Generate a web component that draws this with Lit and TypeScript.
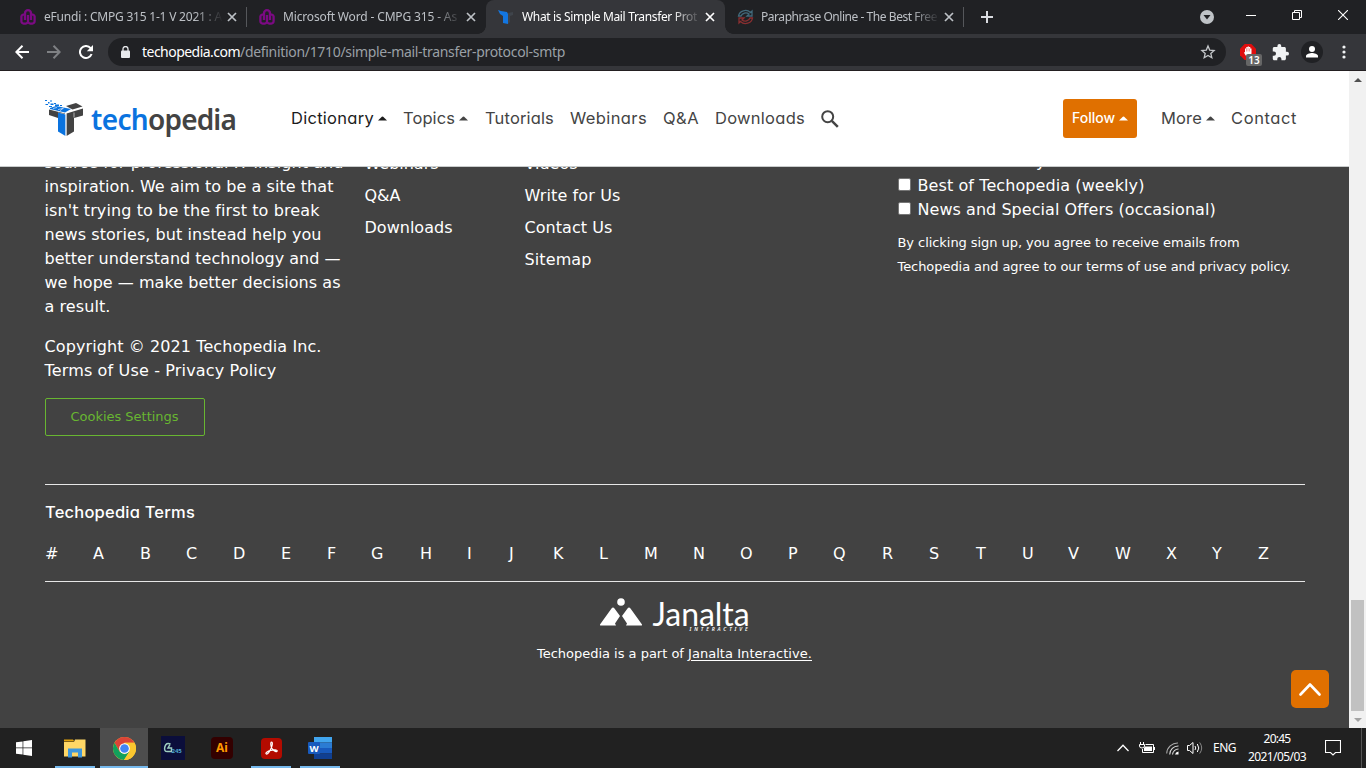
import { LitElement, html, css, svg, nothing } from "lit";
import { customElement, property, state } from "lit/decorators.js";
import { classMap } from "lit/directives/class-map.js";
import { styleMap } from "lit/directives/style-map.js";

/* A single line of text tracked so that it fills a given width. */
@customElement("fit-text")
class FitText extends LitElement {
  @property() text = "";
  @property({ type: Number }) w = 0;
  @state() private track = 0;
  static styles = css`
    :host { display: inline-block; white-space: pre; vertical-align: top; }
    .run { display: inline-block; text-decoration: inherit; text-underline-offset: 2px; }
  `;
  firstUpdated() {
    const run = this.renderRoot.querySelector(".run") as HTMLElement;
    if (this.w) this.track = (this.w - run.getBoundingClientRect().width) / this.text.length;
  }
  render() {
    return html`<span class="run" style=${styleMap({ letterSpacing: this.track + "px" })}>${this.text}</span>`;
  }
}

const t = (text: string, w: number) => html`<fit-text .text=${text} .w=${w}></fit-text>`;

const nwu = html`<svg width="16" height="16" viewBox="0 0 16 16" fill="none" stroke="#7b0a83" stroke-width="2.300"><path d="M5 11V4.200a3 3 0 0 1 6 0V11M8 6v6a2.300 2.300 0 0 1-2.300 2.600H3.700A2.300 2.300 0 0 1 1.400 12V7.500A2.300 2.300 0 0 1 5 6M8 12a2.300 2.300 0 0 0 2.300 2.600h2a2.300 2.300 0 0 0 2.300-2.600V7.500A2.300 2.300 0 0 0 11 6"/></svg>`;
const techIcon = html`<svg width="16" height="16" viewBox="0 0 16 16"><path fill="#1376e0" d="M0 1l3 1 6 1 1 2v10l-5-1V7L2 5z"/><path fill="#3f444b" d="M10 4l5-1v3l-3 1v6l-2 2z"/></svg>`;
const paraIcon = html`<svg width="17" height="16" viewBox="0 0 17 16" fill="none" stroke-width="1.300"><path stroke="#426a7c" d="M1.500 7a7 6.500 0 0 1 12-3.500L15 2v5H10l2-2a5 4.500 0 0 0-8 2z"/><path stroke="#8a2f31" d="M15.500 9a7 6.500 0 0 1-12 3.500L2 14V9h5l-2 2a5 4.500 0 0 0 8-2z"/></svg>`;

const tabs = [
  { icon: nwu, text: "eFundi : CMPG 315 1-1 V 2021 : A", w: 178, active: false, sep: true },
  { icon: nwu, text: "Microsoft Word - CMPG 315 - As", w: 174, active: false, sep: false },
  { icon: techIcon, text: "What is Simple Mail Transfer Prot", w: 175, active: true, sep: false },
  { icon: paraIcon, text: "Paraphrase Online - The Best Free", w: 176, active: false, sep: true },
];

@customElement("browser-chrome")
class BrowserChrome extends LitElement {
  static styles = css`
    :host { display: block; height: 71px; font-family: "Noto Sans", sans-serif; }
    svg { display: block; flex: none; }
    .strip { height: 34px; background: #202124; display: flex; padding-left: 8px; }
    .tab { width: 239px; height: 34px; box-sizing: border-box; padding-left: 12px; display: flex; align-items: center; position: relative; color: #bdc1c6; font-size: 12px; line-height: 16px; }
    .tab.active { background: #35363a; color: #fff; border-radius: 8px 8px 0 0; }
    .tab.active::before, .tab.active::after { content: ""; position: absolute; bottom: 0; width: 8px; height: 8px; }
    .tab.active::before { left: -8px; background: radial-gradient(circle at 0 0, transparent 7.500px, #35363a 8px); }
    .tab.active::after { right: -8px; background: radial-gradient(circle at 100% 0, transparent 7.500px, #35363a 8px); }
    .fav { width: 24px; display: flex; }
    .label { width: 178px; margin-right: 5px; overflow: hidden; -webkit-mask-image: linear-gradient(90deg, #000 150px, transparent 179px); mask-image: linear-gradient(90deg, #000 150px, transparent 179px); }
    .sep { width: 1px; height: 20px; background: #55575b; margin-left: auto; }
    .plus { margin: 10px 0 0 16px; }
    .spacer { flex: 1; }
    .search { margin: 10px 14px 0 0; }
    .ctl { width: 46px; height: 29px; display: flex; align-items: center; justify-content: center; }
    .bar { height: 36px; background: #35363a; border-bottom: 1px solid #231f21; display: flex; align-items: center; }
    .nav { width: 32px; display: flex; justify-content: center; }
    .nav:first-child { margin-left: 6px; }
    .omni { width: 1118px; height: 28px; box-sizing: border-box; border-radius: 14px; background: #202124; margin: 0 6px; display: flex; align-items: center; padding: 0 10px 0 13px; font-size: 14px; line-height: 20px; color: #9aa0a6; }
    .lock { width: 21px; display: flex; }
    .host { color: #fff; }
    .abp { position: relative; }
    .count { position: absolute; left: 6px; top: 10px; width: 16px; height: 12px; border-radius: 2px; background: #666; color: #fff; font-size: 10px; font-weight: 600; line-height: 12px; text-align: center; }
  `;
  render() {
    return html`
      <div class="strip">
        ${tabs.map((tab) => html`
          <div class=${classMap({ tab: true, active: tab.active })}>
            <span class="fav">${tab.icon}</span>
            <span class="label">${t(tab.text, tab.w)}</span>
            <svg width="10" height="10" viewBox="0 0 10 10" stroke="currentColor" stroke-width="1.700"><path d="M1 1l8 8M9 1L1 9"/></svg>
            ${tab.sep ? html`<span class="sep"></span>` : nothing}
          </div>`)}
        <svg class="plus" width="14" height="14" viewBox="0 0 14 14" stroke="#dadce0" stroke-width="2"><path d="M7 1v12M1 7h12"/></svg>
        <span class="spacer"></span>
        <svg class="search" width="14" height="14" viewBox="0 0 14 14"><circle cx="7" cy="7" r="7" fill="#bfc3c7"/><path d="M3.500 5h7L7 9.500z" fill="#202124"/></svg>
        <span class="ctl"><svg width="10" height="10" viewBox="0 0 10 10" stroke="#fff"><path d="M0 5.500h10"/></svg></span>
        <span class="ctl"><svg width="10" height="10" viewBox="0 0 10 10" stroke="#fff" fill="none"><path d="M.5 2.500h7v7h-7zM2.500 2.500v-2h7v7h-2"/></svg></span>
        <span class="ctl"><svg width="10" height="10" viewBox="0 0 10 10" stroke="#fff" stroke-width="1.100"><path d="M0 0l10 10M10 0L0 10"/></svg></span>
      </div>
      <div class="bar">
        <span class="nav"><svg width="14" height="14" viewBox="0 0 14 14" fill="none" stroke="#fff" stroke-width="2"><path d="M14 7H1.500M7.500 .8L1.300 7l6.200 6.200"/></svg></span>
        <span class="nav"><svg width="14" height="14" viewBox="0 0 14 14" fill="none" stroke="#7f8184" stroke-width="2"><path d="M0 7h12.500M6.500 .8L12.700 7l-6.200 6.200"/></svg></span>
        <span class="nav"><svg width="14" height="14" viewBox="0 0 14 14"><path fill="none" stroke="#fff" stroke-width="2" d="M12.600 9A6 6 0 1 1 11.600 3.200"/><path fill="#fff" d="M14 0v6.200H7.800z"/></svg></span>
        <div class="omni">
          <span class="lock"><svg width="9" height="12" viewBox="0 0 9 12"><rect y="4.500" width="9" height="7.500" rx="1" fill="#e8eaed"/><path d="M2 5V3a2.500 2.500 0 0 1 5 0v2" fill="none" stroke="#e8eaed" stroke-width="1.300"/></svg></span>
          <span class="host">${t("techopedia.com", 98)}</span>${t("/definition/1710/simple-mail-transfer-protocol-smtp", 325)}
          <span class="spacer"></span>
          <svg width="16" height="16" viewBox="0 0 16 16" fill="none" stroke="#c4c7ca" stroke-width="1.300"><path d="M8 2l1.700 4.100 4.400.4-3.300 2.900 1 4.300L8 11.400l-3.800 2.300 1-4.300L1.900 6.500l4.400-.4z"/></svg>
        </div>
        <span class="nav"><span class="abp">
          <svg width="16" height="16" viewBox="0 0 16 16"><path fill="#e00d0d" d="M4.700 0h6.600L16 4.700v6.600L11.300 16H4.700L0 11.300V4.700z"/><path fill="#fff" d="M5 8V4.500h1.300V3h1.400v-.5H9V3h1.300v1.500h1.200V9c0 3-1.500 4-3 4-2 0-3.500-2-4.500-4.500L5 8z"/><path d="M6.500 4.500v3M8 3.500v4M9.600 4.500v3" stroke="#e00d0d" stroke-width=".4"/></svg>
          <span class="count">13</span></span></span>
        <span class="nav"><svg width="17" height="17" viewBox="1 1 22 22" fill="#f1f3f4"><path d="M20.500 11H19V7c0-1.100-.9-2-2-2h-4V3.500a2.500 2.500 0 0 0-5 0V5H4c-1.100 0-2 .9-2 2v3.800h1.500a2.700 2.700 0 0 1 0 5.400H2V20c0 1.100.9 2 2 2h3.800v-1.500a2.700 2.700 0 0 1 5.400 0V22H17c1.100 0 2-.9 2-2v-4h1.500a2.500 2.500 0 0 0 0-5z"/></svg></span>
        <span class="nav"><svg width="22" height="22" viewBox="0 0 22 22"><circle cx="11" cy="11" r="11" fill="#202124"/><circle cx="11" cy="8" r="3" fill="#fff"/><path fill="#fff" d="M5 16.500v-1.500c0-2 4-3 6-3s6 1 6 3v1.500z"/></svg></span>
        <span class="nav"><svg width="4" height="14" viewBox="0 0 4 14" fill="#f1f3f4"><circle cx="2" cy="2" r="1.600"/><circle cx="2" cy="7" r="1.600"/><circle cx="2" cy="12" r="1.600"/></svg></span>
      </div>`;
  }
}

const caret = html`<svg class="caret" width="9" height="5" viewBox="0 0 9 5"><path fill="currentColor" d="M0 4.500L3.800.7q.7-.6 1.400 0L9 4.500z"/></svg>`;

@customElement("site-header")
class SiteHeader extends LitElement {
  static styles = css`
    :host { display: flex; height: 95px; background: #fff; border-bottom: 1px solid #c9cccc; font-family: Inter, sans-serif; font-feature-settings: "cv11"; font-size: 16.500px; line-height: 24px; color: #444; align-items: center; }
    svg { display: block; flex: none; }
    .mark { margin: 0 7px 2px 44px; }
    .word { width: 200px; display: flex; font-family: "Noto Sans", sans-serif; font-weight: 600; font-size: 28px; line-height: 36px; color: #434343; padding-top: 1px; }
    .tech { color: #0a73df; }
    .item { display: flex; align-items: center; height: 24px; margin-bottom: 1px; }
    .caret { margin-left: 4px; }
    .dark { color: #1c1c1c; }
    .w1 { width: 112px; } .w2 { width: 82px; } .w3 { width: 85px; } .w4 { width: 93px; } .w5 { width: 52px; } .w6 { width: 106px; }
    .glass { margin-right: 224px; }
    .follow { width: 74px; height: 39px; box-sizing: border-box; padding: 0 0 1px 9px; background: #e07000; border-radius: 3px; color: #fff; display: flex; align-items: center; font-size: 14px; font-weight: 500; margin-right: 24px; }
    .w7 { width: 70px; }
  `;
  render() {
    return html`
      <svg class="mark" width="40" height="38" viewBox="0 0 40 38">
        <g fill="#0a73df"><path d="M6 9l6-2 15 3-6 3.500-15-3.500z"/><path d="M14 13.500l7.500 2V37L14 32.500z"/><path d="M1 1h2v1H1zM4 3h1.500v1.500H4zM6 1.500h2v1H6zM1.500 5H4v1H1.500zM6.500 4.500h3V6h-3zM10 4h2v1h-2zM5 7h3v1H5zM11 5.500h4V7h-4zM16 6h2v1h-2z"/></g>
        <path d="M9 9.500l4-1M14 10.700l5-1.500M20 8.700l-4 3" stroke="#fff" stroke-width=".6"/>
        <g fill="#434343"><path d="M5 10.500l16 4v.500l-7-1.500V19l-9-3z"/><path d="M22.500 14.500L39 9.500v7l-9 2.500v13.500L22.500 37z"/><path d="M22 7l10-3 6.500 3.500-10 3z"/></g>
        <path d="M22 14.500V37M30 18.500v-5" stroke="#fff" stroke-width=".6"/>
      </svg>
      <span class="word"><span class="tech">${t("tech", 57)}</span>${t("opedia", 88)}</span>
      <span class="item dark w1">${t("Dictionary", 83)}${caret}</span>
      <span class="item w2">${t("Topics", 52)}${caret}</span>
      <span class="item w3">${t("Tutorials", 69)}</span>
      <span class="item w4">${t("Webinars", 77)}</span>
      <span class="item w5">${t("Q&A", 36)}</span>
      <span class="item w6">${t("Downloads", 90)}</span>
      <svg class="glass" width="18" height="18" viewBox="0 0 18 18" fill="none" stroke="#444" stroke-width="2"><circle cx="6.700" cy="6.700" r="5.500"/><path d="M10.800 10.800l6 6" stroke-width="2.500"/></svg>
      <span class="follow">${t("Follow", 43)}${caret}</span>
      <span class="item w7">${t("More", 41)}${caret}</span>
      <span class="item">${t("Contact", 66)}</span>`;
  }
}

const about: [string, number][] = [
  ["source for professional IT insight and", 299],
  ["inspiration. We aim to be a site that", 289],
  ["isn't trying to be the first to break", 275],
  ["news stories, but instead help you", 277],
  ["better understand technology and —", 296],
  ["we hope — make better decisions as", 296],
  ["a result.", 66],
];
const letters: [string, number][] = [
  ["#", 48], ["A", 47], ["B", 46], ["C", 47], ["D", 48], ["E", 46], ["F", 44], ["G", 49], ["H", 47], ["I", 42], ["J", 44], ["K", 46], ["L", 45], ["M", 49],
  ["N", 47], ["O", 48], ["P", 45], ["Q", 49], ["R", 47], ["S", 47], ["T", 46], ["U", 46], ["V", 47], ["W", 51], ["X", 46], ["Y", 46], ["Z", 14],
];

@customElement("site-footer")
class SiteFooter extends LitElement {
  static styles = css`
    :host { display: block; height: 561px; overflow: hidden; background: #424242; color: #fff; font-family: "DejaVu Sans", sans-serif; font-size: 16px; line-height: 24px; }
    svg { display: block; flex: none; }
    .cols { display: grid; grid-template-columns: 320px 160px 373px 400px; padding-left: 44.500px; height: 317px; }
    .about { margin-top: -16px; }
    .line { height: 24px; }
    .legal { margin-top: 16px; }
    .cookie { width: 160px; height: 38px; box-sizing: border-box; border: 1px solid #68b631; border-radius: 2px; color: #68b631; font-size: 13px; line-height: 36px; text-align: center; margin-top: 15px; }
    .links { margin-top: -19px; line-height: 32px; }
    .links div { height: 32px; }
    .sign { margin-top: -17px; }
    .opt { display: flex; align-items: center; height: 24px; }
    .box { width: 11px; height: 11px; background: #fff; border: 1px solid #767676; border-radius: 2px; margin: 0 7px 4px 0; }
    .fine { font-size: 13px; margin-top: 9px; }
    .fine div { height: 24px; }
    .terms { margin: 0 44px 0 45px; height: 96px; border-top: 1px solid #e6e6e6; border-bottom: 1px solid #e6e6e6; }
    h4 { margin: 15px 0 0; font: 500 16.500px/24px Inter, sans-serif; font-feature-settings: "cv11"; }
    .row { display: flex; margin-top: 18px; height: 24px; }
    .row span { flex: none; }
    .owner { display: flex; flex-direction: column; align-items: center; padding-top: 16px; font-size: 13px; line-height: 20px; }
    .brand { display: flex; height: 33px; }
    .name { margin-left: 11px; width: 97px; font: 400 32px/31px Lato, sans-serif; position: relative; }
    .sub { position: absolute; right: -1px; top: 28px; font: italic 600 5px/6px "Noto Sans", sans-serif; }
    .part { margin-top: 13px; }
    .part u { text-underline-offset: 2px; }
    .under { text-decoration: underline; }
    .top { position: absolute; left: 1291px; top: 670px; width: 38px; height: 38px; border-radius: 5px; background: #e07000; display: flex; align-items: center; justify-content: center; }
  `;
  private opt(text: string, w: number) {
    return html`<div class="opt"><span class="box"></span>${t(text, w)}</div>`;
  }
  render() {
    return html`
      <div class="cols">
        <div class="about">
          ${about.map(([s, w]) => html`<div class="line">${t(s, w)}</div>`)}
          <div class="line legal">${t("Copyright © 2021 Techopedia Inc.", 277)}</div>
          <div class="line">${t("Terms of Use - Privacy Policy", 232)}</div>
          <div class="cookie">${t("Cookies Settings", 108)}</div>
        </div>
        <div class="links">
          <div>${t("Webinars", 74)}</div><div>${t("Q&A", 36)}</div><div>${t("Downloads", 88)}</div>
        </div>
        <div class="links">
          <div>${t("Videos", 53)}</div><div>${t("Write for Us", 96)}</div><div>${t("Contact Us", 88)}</div><div>${t("Sitemap", 67)}</div>
        </div>
        <div class="sign">
          ${this.opt("Term of the Day", 128)}${this.opt("Best of Techopedia (weekly)", 227)}${this.opt("News and Special Offers (occasional)", 298)}
          <div class="fine"><div>${t("By clicking sign up, you agree to receive emails from", 342)}</div><div>${t("Techopedia and agree to our terms of use and privacy policy.", 393)}</div></div>
        </div>
      </div>
      <div class="terms">
        <h4>${t("Techopedia Terms", 150)}</h4>
        <div class="row">${letters.map(([c, w]) => html`<span style=${styleMap({ width: w + "px" })}>${c}</span>`)}</div>
      </div>
      <div class="owner">
        <div class="brand">
          <svg width="42" height="33" viewBox="0 0 42 33" fill="#fff"><circle cx="21" cy="4" r="3.800"/><path d="M0 26.500L11.500 10.500Q13 8.500 14.500 10.500L20 18l-5 7.500 1 2H1Q-.500 27.500 0 26.500zM42 26.500L30.500 10.500Q29 8.500 27.500 10.500L22 18l5 7.500-1 2h15q1.500 0 1-1z"/></svg>
          <div class="name">${t("Janalta", 97)}<span class="sub">${t("INTERACTIVE", 61)}</span></div>
        </div>
        <div class="part">${t("Techopedia is a part of ", 151)}<fit-text class="under" .text=${"Janalta Interactive."} .w=${124}></fit-text></div>
      </div>
      <div class="top"><svg width="22" height="14" viewBox="0 0 22 14" fill="none" stroke="#fff" stroke-width="2.600" stroke-linecap="round" stroke-linejoin="round"><path d="M1.500 12.500L11 2.500l9.500 10"/></svg></div>`;
  }
}

const apps = [
  { on: true, active: false, icon: svg`<svg width="22" height="20" viewBox="0 0 22 20"><path fill="#e2a20c" d="M0 1.500h9l1.500 2H0z"/><path fill="#ffd766" d="M0 4h10l1-2.500h10.500v17H0z"/><path fill="#3f97dc" d="M4 19.500v-9h14v9h-4v-5H8v5z"/></svg>` },
  { on: true, active: true, icon: svg`<svg width="23" height="23" viewBox="0 0 24 24"><circle cx="12" cy="12" r="12" fill="#fbc72f"/><path fill="#db4437" d="M12 0a12 12 0 0 1 10.400 6H12L6.800 15 1.600 6A12 12 0 0 1 12 0z"/><path fill="#12a05c" d="M1.600 6A12 12 0 0 0 11.500 24l5.700-9-5.200 3-5.200-3z"/><path fill="#fbc72f" d="M22.400 6A12 12 0 0 1 11.500 24l5.700-9V9L12 6z"/><circle cx="12" cy="12" r="5.600" fill="#fff"/><circle cx="12" cy="12" r="4.500" fill="#4285f4"/></svg>` },
  { on: false, active: false, icon: svg`<svg width="24" height="24" viewBox="0 0 24 24"><rect width="24" height="24" fill="#0b0e3b"/><path d="M9.500 8Q5 6 3.800 11T7 15.500h3.500V12H7l2-3.500" stroke="#9fcfc0" stroke-width="1.500" fill="none"/><text x="10.500" y="16.500" font-family="Noto Sans" font-weight="700" font-size="6" fill="#4ea8cf">245</text></svg>` },
  { on: false, active: false, icon: svg`<svg width="22" height="22" viewBox="0 0 22 22"><rect width="22" height="22" rx="4" fill="#330000"/><text x="11" y="15" text-anchor="middle" font-family="Noto Sans" font-weight="700" font-size="12" fill="#ff9a00">Ai</text></svg>` },
  { on: true, active: false, icon: svg`<svg width="21" height="21" viewBox="0 0 21 21"><rect width="21" height="21" rx="4" fill="#b30b00"/><path d="M10.500 4c1.500 0 .8 3.500-.3 6-1.300 3-3.500 6.500-4.900 6-1.500-.7 1-2.800 4.500-3.600 3-.7 6.500-.8 6.400.6-.1 1.600-3.200 0-4.900-2C9.600 8.800 9.300 4 10.500 4z" fill="none" stroke="#fff" stroke-width="1.200"/></svg>` },
  { on: true, active: false, icon: svg`<svg width="24" height="22" viewBox="0 0 24 22"><path fill="#41a5ee" d="M6 0h18v5.500H6z"/><path fill="#2b7cd3" d="M6 5.500h18V11H6z"/><path fill="#185abd" d="M6 11h18v5.500H6z"/><path fill="#103f91" d="M6 16.500h18V22H6z"/><rect y="5" width="12" height="12" rx="1" fill="#185abd"/><text x="6" y="14.500" text-anchor="middle" font-family="Noto Sans" font-weight="700" font-size="9.500" fill="#fff">W</text></svg>` },
];

@customElement("task-bar")
class TaskBar extends LitElement {
  static styles = css`
    :host { display: flex; height: 40px; background: #212121; color: #fff; font-family: "Noto Sans", sans-serif; font-size: 12px; line-height: 18px; align-items: center; }
    svg { display: block; flex: none; }
    .start { width: 48px; margin-right: 3px; display: flex; justify-content: center; }
    .app { width: 48px; height: 40px; margin-right: 1px; box-sizing: border-box; display: flex; flex-direction: column; align-items: center; }
    .pic { height: 38px; padding-top: 2px; box-sizing: border-box; display: flex; align-items: center; }
    .line { width: 40px; height: 2px; background: #76b9ed; }
    .active { background: #4d4d4d; }
    .active .line { width: 48px; }
    .spacer { flex: 1; }
    .plug { margin-left: 10px; } .wifi { margin-left: 11px; } .vol { margin-left: 8px; }
    .lang { margin-left: 10px; }
    .clock { width: 60px; margin: 0 18px 0 11px; text-align: center; }
    .clock div { height: 18px; }
    .edge { width: 1px; height: 40px; background: #555; margin-left: 20px; margin-right: 4px; }
  `;
  render() {
    return html`
      <span class="start"><svg width="16" height="16" viewBox="0 0 16 16" fill="#fff"><path d="M0 2.300l6.600-.9v6.200H0zM7.300 1.300L16 0v7.600H7.300zM0 8.300h6.600v6.300L0 13.700zM7.300 8.300H16V16l-8.700-1.300z"/></svg></span>
      ${apps.map((a) => html`<div class=${classMap({ app: true, active: a.active })}><span class="pic">${a.icon}</span>${a.on ? html`<span class="line"></span>` : nothing}</div>`)}
      <span class="spacer"></span>
      <svg width="12" height="8" viewBox="0 0 12 8" fill="none" stroke="#fff" stroke-width="1.300"><path d="M.5 7L6 1.300 11.500 7"/></svg>
      <svg class="plug" width="16" height="12" viewBox="0 0 16 12" fill="none" stroke="#fff"><path d="M6.500 2.500h8v8H3.500V7M15.500 5v3M1.500 0v2M4.500 0v2M.5 2.500h5V4q0 2-2.500 2T.5 4z"/><path fill="#fff" stroke="none" d="M6 4.500h7v4.500H5V6z"/></svg>
      <svg class="wifi" width="13" height="13" viewBox="0 0 13 13" fill="none" stroke="#ddd" stroke-width="1.100"><path d="M.7 11.500A11 11 0 0 1 12 1" stroke="#aaa"/><path d="M3.700 12.500A8.500 8.500 0 0 1 12.500 4M6.500 12.500a6 6 0 0 1 6-5.500"/><path d="M9 12.500q.5-2.500 3.500-3v3z" fill="#fff" stroke="none"/></svg>
      <svg class="vol" width="16" height="14" viewBox="0 0 16 14" fill="none" stroke="#fff"><path d="M.5 4.500h2L6 1.500v11l-3.500-3h-2zM8 5q1.500 2 0 4M10.300 3q3 4 0 8"/><path stroke="#888" d="M12.700 1.500q4 5.500 0 11"/></svg>
      <span class="lang">${t("ENG", 23)}</span>
      <div class="clock"><div>${t("20:45", 27)}</div><div>${t("2021/05/03", 58)}</div></div>
      <svg width="16" height="16" viewBox="0 0 16 16" fill="none" stroke="#fff" stroke-width="1.100"><path d="M.5 .5h15v12h-5L8 15l-2.500-2.500h-5z"/></svg>
      <span class="edge"></span>`;
  }
}

@customElement("app-root")
class AppRoot extends LitElement {
  static styles = css`
    :host { display: block; width: 1366px; height: 768px; overflow: hidden; position: relative; }
    .view { display: flex; height: 657px; }
    .page { width: 1349px; }
    .scroll { width: 17px; box-sizing: border-box; background: #f1f1f1; display: flex; flex-direction: column; align-items: center; padding: 7px 0 6px; }
    .scroll svg { display: block; }
    .thumb { width: 13px; height: 111px; background: #c1c1c1; margin: auto 0 7px; }
  `;
  render() {
    return html`
      <browser-chrome></browser-chrome>
      <div class="view">
        <div class="page"><site-header></site-header><site-footer></site-footer></div>
        <div class="scroll">
          <svg width="8" height="4" viewBox="0 0 8 4"><path fill="#505050" d="M0 4l4-4 4 4z"/></svg>
          <div class="thumb"></div>
          <svg width="8" height="4" viewBox="0 0 8 4"><path fill="#a3a3a3" d="M0 0h8L4 4z"/></svg>
        </div>
      </div>
      <task-bar></task-bar>`;
  }
}
